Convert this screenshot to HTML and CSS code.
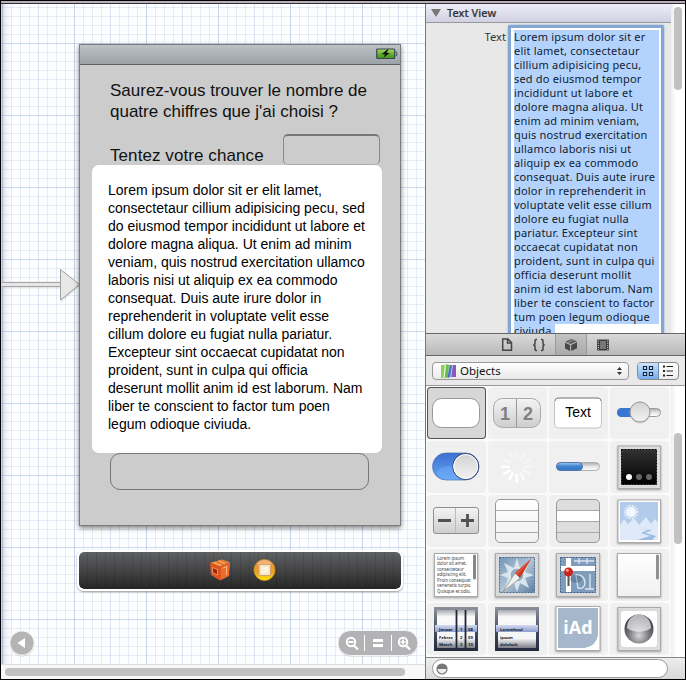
FILE: index.html
```html
<!DOCTYPE html>
<html lang="fr">
<head>
<meta charset="utf-8">
<title>Interface Builder</title>
<link rel="stylesheet" href="styles.css">
</head>
<body>
<div class="window">
  <div class="titlestrip"></div>
  <div class="panes">
    <main class="editor">
      <div class="canvas">
        <svg class="entry" width="80" height="40" viewBox="0 0 80 40">
          <path d="M1 17.5H60V7.500L79 22.500L60 38.500V24.500H1Z" fill="#bbb" opacity=".35"/>
          <path d="M1 18.500H60M1 22.500H60" stroke="#a5a5a5"/>
          <path d="M1 19H60V22H1Z" fill="#e6e6e6"/>
          <path d="M59.500 5.500L78.500 20.500L59.500 36Z" fill="#e8e8e8" stroke="#a0a0a0"/>
        </svg>
        <section class="phone">
          <div class="status">
            <svg width="22" height="12" viewBox="0 0 22 12">
              <defs><linearGradient id="bat" x2="0" y2="1"><stop offset="0" stop-color="#a5d673"/><stop offset=".5" stop-color="#68b531"/><stop offset="1" stop-color="#3d8f18"/></linearGradient></defs>
              <rect x=".7" y="1" width="18" height="9.500" rx="1" fill="url(#bat)" stroke="#3b4650" stroke-width="1.200"/>
              <path d="M19.500 4h1.300v3.500h-1.300" fill="#8b9297" stroke="#3b4650" stroke-width=".8"/>
              <path d="M11.500 1.500L5.500 6.200H9L7.500 9.500L14 5H10.500L12.500 1.500Z" fill="#111"/>
            </svg>
          </div>
          <div class="content">
            <p class="question">Saurez-vous trouver le nombre de<br>quatre chiffres que j'ai choisi ?</p>
            <div class="guess"><span>Tentez votre chance</span><div class="field"></div></div>
            <div class="textview">Lorem ipsum dolor sit er elit lamet,<br>consectetaur cillium adipisicing pecu, sed<br>do eiusmod tempor incididunt ut labore et<br>dolore magna aliqua. Ut enim ad minim<br>veniam, quis nostrud exercitation ullamco<br>laboris nisi ut aliquip ex ea commodo<br>consequat. Duis aute irure dolor in<br>reprehenderit in voluptate velit esse<br>cillum dolore eu fugiat nulla pariatur.<br>Excepteur sint occaecat cupidatat non<br>proident, sunt in culpa qui officia<br>deserunt mollit anim id est laborum. Nam<br>liber te conscient to factor tum poen<br>legum odioque civiuda.</div>
            <div class="button"></div>
          </div>
        </section>
        <div class="dock">
          <svg width="22" height="24" viewBox="0 0 22 24">
            <path d="M1 5L13 1.500L21 4.500L11 9Z" fill="#f79a4d"/><path d="M1 5L11 9L11 22.500L2 17Z" fill="#e2551f"/><path d="M11 9L21 4.500L20 18L11 22.500Z" fill="#ec6b2a"/>
            <path d="M3.500 9.500L8.500 11.500V17L3.500 14.500Z" fill="#9f2410" stroke="#f5a26a" stroke-width=".8"/><path d="M14 10L17.500 8.500V17" fill="none" stroke="#fbc08a" stroke-width=".9"/><path d="M1 5L11 9L21 4.500M11 9V22" fill="none" stroke="#c6461a" stroke-width=".8"/><path d="M7 3.500L15 7M12 2L18 5" stroke="#d95a20"/>
          </svg>
          <svg width="23" height="24" viewBox="0 0 23 24">
            <defs><linearGradient id="orb" x2="0" y2="1"><stop offset="0" stop-color="#e88d42"/><stop offset=".65" stop-color="#eda322"/><stop offset="1" stop-color="#fff000"/></linearGradient></defs>
            <circle cx="11.500" cy="12" r="10.500" fill="url(#orb)" stroke="#d5921f" stroke-width=".8"/><ellipse cx="11.500" cy="6" rx="7" ry="4" fill="#fff" opacity=".3"/>
            <path d="M6 6.500H17.500V17.500H6Z" fill="#f8e6cb" stroke="#d0a468"/><path d="M8.500 9H15V15H8.500Z" fill="#fdf3df"/>
          </svg>
        </div>
        <svg class="back" width="28" height="28" viewBox="0 0 28 28"><circle cx="14" cy="15" r="12.500" fill="#ccc"/><circle cx="14" cy="14" r="12.200" fill="#b4b4b4" stroke="#f7f7f7" stroke-width="1.200"/><path d="M9.500 14L17 9V19Z" fill="#fff"/></svg>
        <svg class="zoom" width="84" height="29" viewBox="0 0 84 29">
          <rect x="2" y="2.500" width="80" height="25" rx="12.500" fill="#ccc"/><rect x="2" y="1.500" width="80" height="25" rx="12.500" fill="#b3b3b6" stroke="#f3f3f3"/>
          <path d="M28.500 6V22M55.500 6V22" stroke="#fff"/><g fill="none" stroke="#fff" stroke-width="2"><circle cx="15" cy="13" r="4.200"/><path d="M12.500 13H17.500M18 16.500L22 20.500" stroke-width="2.200"/><path d="M37 11.500H47M37 16.500H47" stroke-width="3"/><circle cx="67" cy="13" r="4.200"/><path d="M70 16.500L74 20.500" stroke-width="2.400"/><path d="M64.500 13H69.500M67 10.500V15.500" stroke-width="1.600"/></g>
        </svg>
      </div>
      <div class="hscroll"><div class="hthumb"></div></div>
    </main>

    <aside class="utilities">
      <section class="inspector">
        <div class="attributes">
          <header class="section-head"><span class="disclosure"></span><span class="section-title">Text View</span></header>
          <div class="row">
            <label>Text</label>
            <div class="textarea"><div class="selected">Lorem ipsum dolor sit er<br>elit lamet, consectetaur<br>cillium adipisicing pecu,<br>sed do eiusmod tempor<br>incididunt ut labore et<br>dolore magna aliqua. Ut<br>enim ad minim veniam,<br>quis nostrud exercitation<br>ullamco laboris nisi ut<br>aliquip ex ea commodo<br>consequat. Duis aute irure<br>dolor in reprehenderit in<br>voluptate velit esse cillum<br>dolore eu fugiat nulla<br>pariatur. Excepteur sint<br>occaecat cupidatat non<br>proident, sunt in culpa qui<br>officia deserunt mollit<br>anim id est laborum. Nam<br>liber te conscient to factor<br>tum poen legum odioque</div><span class="lastline">civiuda.</span></div>
          </div>
        </div>
        <div class="vscroll"><div class="vthumb"></div></div>
      </section>

      <nav class="tabs">
        <span class="tab"><svg width="14" height="16" viewBox="0 0 14 16"><path d="M2.700 2H8L11.500 5.500V13.300H2.700Z M7.500 2V6H11.500" fill="none" stroke="#444" stroke-width="1.500"/></svg></span>
        <span class="tab"><svg width="14" height="14" viewBox="0 0 14 14"><path d="M5 1.500H4Q3 1.500 3 3V5.500Q3 7 1.300 7Q3 7 3 8.500V11Q3 12.500 4 12.500H5M9 1.500H10Q11 1.500 11 3V5.500Q11 7 12.700 7Q11 7 11 8.500V11Q11 12.500 10 12.500H9" fill="none" stroke="#444" stroke-width="1.500"/></svg></span>
        <span class="tab active"><svg width="14" height="14" viewBox="0 0 14 14"><path d="M1 3.700L7.500 1L13 3.200L6.500 6Z" fill="#5b5b5b"/><path d="M1 4.800L6 7V13L1 10.500ZM7.200 7L13 4.300V10.300L7.200 13Z" fill="#484848"/><path d="M3.500 4.500L9.500 2" stroke="#aaa" stroke-width=".7"/></svg></span>
        <span class="tab"><svg width="14" height="12" viewBox="0 0 14 12"><path d="M1 .5H13V11.500H1Z" fill="#3c3c3c"/><path d="M2.300 1.500V11M11.700 1.500V11" stroke="#ccc" stroke-width="1.200" stroke-dasharray="1 1.200"/><path d="M4 2H10V10H4Z" fill="#777"/></svg></span>
      </nav>

      <div class="libbar">
        <div class="popup">
          <svg width="17" height="16" viewBox="0 0 17 16"><path d="M1 2H5L4 15H1Z" fill="#88cf5a"/><path d="M5 1.500H9L8 14L4 15.500Z" fill="#6dbb49"/><path d="M5.500 2L4 15" stroke="#e4f8d5" stroke-width="1.300"/><path d="M9.500 2H12.500L10.500 14L7.500 15Z" fill="#4577c9"/><path d="M12.500 2H16V14H11Z" fill="#8a59bd"/><path d="M12.500 2L10.700 14" stroke="#d8d0f5" stroke-width=".7"/></svg>
          <span class="popup-name">Objects</span>
          <svg width="7" height="10" viewBox="0 0 7 10"><path d="M1 4L3.500 1L6 4ZM1 6H6L3.500 9Z" fill="#333"/></svg>
        </div>
        <div class="views">
          <span class="view on"><svg width="12" height="12" viewBox="0 0 12 12"><path d="M1.500 1.500H4.500V4.500H1.500ZM7.500 1.500H10.500V4.500H7.500ZM1.500 7.500H4.500V10.500H1.500ZM7.500 7.500H10.500V10.500H7.500Z" fill="#d9ecff" stroke="#10243e" stroke-width="1.200"/></svg></span>
          <span class="view"><svg width="12" height="12" viewBox="0 0 12 12"><path d="M1 1.500H3M1 6H3M1 10.500H3" stroke="#222" stroke-width="2"/><path d="M4.500 1.500H11M4.500 6H11M4.500 10.500H11" stroke="#222"/></svg></span>
        </div>
      </div>

      <section class="library">
        <svg class="defs" width="0" height="0">
          <defs>
            <linearGradient id="grey" x2="0" y2="1"><stop offset="0" stop-color="#f4f4f4"/><stop offset="1" stop-color="#cdcdcd"/></linearGradient>
            <linearGradient id="soft" x2="0" y2="1"><stop offset="0" stop-color="#fff"/><stop offset="1" stop-color="#f0f0f0"/></linearGradient>
            <linearGradient id="blue" x2="0" y2="1"><stop offset="0" stop-color="#3d6fd2"/><stop offset="1" stop-color="#64a5f4"/></linearGradient>
            <linearGradient id="bar" x2="0" y2="1"><stop offset="0" stop-color="#a0c5ee"/><stop offset=".5" stop-color="#3f83d0"/><stop offset="1" stop-color="#3277c8"/></linearGradient>
            <linearGradient id="groove" x2="0" y2="1"><stop offset="0" stop-color="#aaa"/><stop offset=".5" stop-color="#e5e5e5"/><stop offset="1" stop-color="#fff"/></linearGradient>
            <linearGradient id="knob" x2="0" y2="1"><stop offset="0" stop-color="#d2d2d2"/><stop offset="1" stop-color="#f3f3f3"/></linearGradient>
            <linearGradient id="black" x2="0" y2="1"><stop offset="0" stop-color="#333"/><stop offset="1" stop-color="#000"/></linearGradient>
            <linearGradient id="frame" x2="0" y2="1"><stop offset="0" stop-color="#8e929b"/><stop offset=".55" stop-color="#444b60"/><stop offset="1" stop-color="#24283a"/></linearGradient>
            <linearGradient id="wheel" x2="0" y2="1"><stop offset="0" stop-color="#a9a9af"/><stop offset=".18" stop-color="#fafafa"/><stop offset=".75" stop-color="#f5f5f5"/><stop offset="1" stop-color="#7b7d88"/></linearGradient>
            <linearGradient id="band" x2="0" y2="1"><stop offset="0" stop-color="#d5dcf0"/><stop offset="1" stop-color="#8b9aca"/></linearGradient>
            <linearGradient id="sea" x2="1" y2="1"><stop offset="0" stop-color="#7195b9"/><stop offset=".5" stop-color="#b0c5d4"/><stop offset="1" stop-color="#5c7fa4"/></linearGradient>
            <radialGradient id="ball" cx=".5" cy=".72" r=".65"><stop offset="0" stop-color="#d7d7db"/><stop offset=".55" stop-color="#77777f"/><stop offset="1" stop-color="#35353b"/></radialGradient>
          </defs>
        </svg>
        <div class="grid">
          <div class="cell chosen"><svg viewBox="0 0 59 53"><rect x="5.500" y="11.500" width="47" height="29" rx="9" fill="#fff" stroke="#999"/></svg></div>
          <div class="cell"><svg viewBox="0 0 59 53"><rect x="5.500" y="11.500" width="47" height="29" rx="9" fill="url(#grey)" stroke="#aaa"/><path d="M28.500 12V40" stroke="#999"/><g class="seg"><text x="17" y="33">1</text><text x="40" y="33">2</text></g></svg></div>
          <div class="cell"><svg viewBox="0 0 59 53"><rect x="5.500" y="11" width="47" height="30" rx="4" fill="#fff" stroke="#c4c4c4"/><path d="M6 14Q6 11 9 11H49Q52 11 52 14" fill="none" stroke="#888"/><text class="sample" x="29" y="30">Text</text></svg></div>
          <div class="cell"><svg viewBox="0 0 59 53"><rect x="7.500" y="21.500" width="43" height="8" rx="4" fill="url(#groove)" stroke="#999"/><rect x="7" y="21" width="25" height="9" rx="4.500" fill="#3877d4"/><circle cx="30" cy="26" r="10.500" fill="#aaa" opacity=".4"/><circle cx="30" cy="25" r="10" fill="url(#knob)" stroke="#999"/></svg></div>

          <div class="cell"><svg viewBox="0 0 59 53"><rect x="5.500" y="12" width="46.500" height="27" rx="13.500" fill="url(#blue)" stroke="#4a6faa" stroke-width=".7"/><ellipse cx="24" cy="32" rx="14" ry="7" fill="#75b0ff" opacity=".45"/><circle cx="38.700" cy="25.500" r="13" fill="url(#knob)" stroke="#283d68"/><circle cx="38.700" cy="25.500" r="12" fill="none" stroke="#fff"/></svg></div>
          <div class="cell"><svg viewBox="0 0 59 53"><g transform="translate(28.700 25.700)" stroke="#fff" stroke-width="2.600" stroke-linecap="round"><path d="M0 8V14.500"/><path d="M0 8V14.500" transform="rotate(30)"/><path d="M0 8V14.500" transform="rotate(60)"/><path d="M0 8V14.500" transform="rotate(90)"/><path d="M0 8V14.500" transform="rotate(120)" opacity=".5"/><path d="M0 8V14.500" transform="rotate(150)" opacity=".35"/><path d="M0 8V14.500" transform="rotate(180)" opacity=".3"/><path d="M0 8V14.500" transform="rotate(210)" opacity=".3"/><path d="M0 8V14.500" transform="rotate(240)" opacity=".35"/><path d="M0 8V14.500" transform="rotate(270)" opacity=".4"/><path d="M0 8V14.500" transform="rotate(300)" opacity=".5"/><path d="M0 8V14.500" transform="rotate(330)" opacity=".75"/></g></svg></div>
          <div class="cell"><svg viewBox="0 0 59 53"><rect x="7.500" y="21.500" width="43" height="8" rx="4" fill="url(#groove)" stroke="#b0b0b0"/><rect x="7.500" y="21.500" width="26" height="8" rx="4" fill="url(#bar)" stroke="#5578a5"/></svg></div>
          <div class="cell"><svg viewBox="0 0 59 53"><rect class="tile" x="8" y="5" width="42.500" height="42.500" fill="#dcdcdc"/><rect x="11.500" y="8.500" width="35" height="35" fill="url(#black)" stroke="#000" stroke-dasharray="2 1"/><circle cx="19" cy="36" r="3" fill="#fff"/><circle cx="29" cy="36" r="3" fill="#666"/><circle cx="39" cy="36" r="3" fill="#666"/></svg></div>

          <div class="cell"><svg viewBox="0 0 59 53"><rect x="6.500" y="12.500" width="45" height="26" rx="2.500" fill="url(#grey)" stroke="#8e8e8e"/><path d="M28.500 13V38" stroke="#bbb"/><path d="M11 25.500H24M34 25.500H47M40.500 19V32" stroke="#505056" stroke-width="2.800"/></svg></div>
          <div class="cell"><svg viewBox="0 0 59 53"><rect x="7.500" y="4.500" width="43" height="43" rx="4.500" fill="url(#soft)" stroke="#999"/><path d="M8 15.500H50M8 26.500H50M8 37.500H50" stroke="#aaa"/></svg></div>
          <div class="cell"><svg viewBox="0 0 59 53"><rect x="7.500" y="4.500" width="43" height="43" rx="4.500" fill="#dedede" stroke="#999"/><path d="M8 16H50V26H8Z" fill="#fff"/><path d="M8 15.500H50M8 26.500H50M8 37.500H50" stroke="#aaa"/></svg></div>
          <div class="cell"><svg viewBox="0 0 59 53"><rect class="tile" x="8" y="5" width="42.500" height="42.500" fill="#fff"/><path d="M10 7H48V45H10Z" fill="#b3cbea"/><path d="M10 30L14 24L18 29L24 23L29 30L36 22L41 29L45 24L48 28V45H10Z" fill="#dfe9f7"/><circle cx="21" cy="17" r="5" fill="#f3f8ff"/><circle cx="21" cy="17" r="6.300" fill="none" stroke="#e7f1ff" stroke-width="2" stroke-dasharray="1.400 1.100"/><path d="M28 34L38 35L31 38L40 41L27 45H42L46 41L35 38L42 35Z" fill="#9cbbe3"/></svg></div>

          <div class="cell"><svg viewBox="0 0 59 53"><rect class="tile" x="7.500" y="4.500" width="43" height="43" fill="#fff"/><path d="M47.500 7V29" stroke="#888" stroke-width="3" stroke-linecap="round"/><g class="tiny"><text x="10" y="10.500">Lorem ipsum</text><text x="10" y="16">dolor sit amet,</text><text x="10" y="21.500">consectetaur</text><text x="10" y="27">adipiscing elit.</text><text x="10" y="32.500">Proin consequat</text><text x="10" y="38">venenatis turpis.</text><text x="10" y="43.500">Quisque et odio.</text></g></svg></div>
          <div class="cell"><svg viewBox="0 0 59 53"><rect class="tile" x="7.500" y="4.500" width="43" height="43" fill="#dcdcdc"/><rect x="11.500" y="8.500" width="35" height="35" fill="url(#sea)" stroke="#48698c" stroke-dasharray="2 1"/><path d="M29 9L32 19L41 14L37 23L46 26L37 29L41 39L32 34L29 43L26 34L17 39L20 29L12 26L20 23L16 14L26 19Z" fill="#d8e5ec"/><circle cx="29" cy="26" r="7" fill="#91afc6" stroke="#edf4f8"/><path d="M43 10L32 29L27 24Z" fill="#ce3421"/><path d="M27 24L32 29L15 43Z" fill="#f1f1ee" stroke="#888" stroke-width=".7"/><path d="M43 10L27 24L29.500 26.500Z" fill="#e0523c"/></svg></div>
          <div class="cell"><svg viewBox="0 0 59 53"><rect class="tile" x="7.500" y="4.500" width="43" height="43" fill="#dcdcdc"/><rect x="11.500" y="8.500" width="35" height="35" fill="#7f9cbd"/><path d="M17 9H22V17H46V22H22V43H17V22H12V17H17Z" fill="#fff"/><path d="M25 12H45M30 9V15M38 9V15M27 26C38 24 39 42 29 39ZM41 25V40M36 40H45" fill="none" stroke="#dce6ef" stroke-width="1.400"/><rect x="11.500" y="8.500" width="35" height="35" fill="none" stroke="#365d86" stroke-dasharray="2 1"/><ellipse cx="27" cy="30" rx="6" ry="4" fill="#47627f" opacity=".4"/><path d="M19.500 24V37" stroke="#555" stroke-width="2"/><circle cx="19.500" cy="23" r="4.500" fill="#cc2419"/><circle cx="18.300" cy="21.300" r="1.500" fill="#f6a49b"/></svg></div>
          <div class="cell"><svg viewBox="0 0 59 53"><rect class="tile" x="7.500" y="4.500" width="43" height="43" fill="url(#soft)"/><path d="M47.500 7V29" stroke="#909090" stroke-width="3" stroke-linecap="round"/></svg></div>

          <div class="cell"><svg viewBox="0 0 59 53"><rect x="7" y="4" width="44" height="44" fill="url(#frame)"/><rect x="10" y="7" width="38" height="38" fill="url(#wheel)"/><path d="M8 22H50V29H8Z" fill="url(#band)"/><path d="M29.500 7V45M38.500 7V45" stroke="#222736" stroke-width="1.800"/><g class="wheeltext"><text x="12" y="27.500">Januar</text><text x="12" y="35.500">Febrec</text><text x="12" y="43">Match</text><text x="33" y="27.500">1</text><text x="33" y="35.500">2</text><text x="33" y="43">3</text><text x="41" y="27.500">08</text><text x="41" y="35.500">09</text><text x="41" y="43">10</text></g></svg></div>
          <div class="cell"><svg viewBox="0 0 59 53"><rect x="7" y="4" width="44" height="44" fill="url(#frame)"/><rect x="10" y="7" width="38" height="38" fill="url(#wheel)"/><path d="M8 22H50V29H8Z" fill="url(#band)"/><g class="wheeltext"><text x="12" y="27.500">Loremhoul</text><text x="12" y="35.500">ipsum</text><text x="12" y="43">dolobult</text></g></svg></div>
          <div class="cell"><svg viewBox="0 0 59 53"><rect class="tile" x="7" y="3.500" width="44" height="44" fill="#fff"/><path d="M9 5H49V32Q47 43 36 45H9Z" fill="#a6b7cb"/><text class="iad" x="29" y="30.500">iAd</text></svg></div>
          <div class="cell"><svg viewBox="0 0 59 53"><rect class="tile" x="8" y="4.500" width="42.500" height="43" fill="#dcdcdc"/><rect x="11" y="8" width="36" height="36" rx="3" fill="#fff"/><circle cx="29" cy="26" r="14.500" fill="url(#ball)"/><path d="M17 25C17 7 41 7 41 25C35 30 23 30 17 25Z" fill="#f6f6f8" opacity=".68"/></svg></div>
        </div>
        <div class="vscroll"><div class="vthumb low"></div></div>
      </section>
      <footer class="filter"><div class="search"><svg width="12" height="12" viewBox="0 0 12 12"><circle cx="6" cy="6" r="5" fill="#eee" stroke="#777" stroke-width="1.200"/><path d="M1 6A5 5 0 0 1 11 6Z" fill="#777"/></svg></div></footer>
    </aside>
  </div>
</div>
</body>
</html>
```
FILE: styles.css
```css
* { box-sizing: border-box; }
body { margin: 0; background: #000; font-family: "Liberation Sans", Arial, sans-serif; }
.window { width: 686px; height: 680px; padding: 1px; display: flex; flex-direction: column; }
.titlestrip { height: 3px; background: #b9adb9; border-bottom: 1px solid #343039; }
.panes { flex: 1; display: flex; min-height: 0; }

.editor { width: 424px; display: flex; flex-direction: column; }
.canvas {
  position: relative; flex: 1; overflow: hidden;
  background:
    linear-gradient(90deg, rgba(120,130,165,.4), rgba(120,130,165,.1) 5px, transparent 11px),
    repeating-linear-gradient(90deg, transparent 0 1px, rgba(160,185,220,.36) 1px 2px, transparent 2px 72px),
    repeating-linear-gradient(90deg, transparent 0 1px, rgba(170,190,220,.2) 1px 2px, transparent 2px 36px),
    repeating-linear-gradient(90deg, transparent 0 1px, rgba(180,195,225,.3) 1px 2px, transparent 2px 9px),
    repeating-linear-gradient(180deg, transparent 0 39px, rgba(160,185,220,.36) 39px 40px, transparent 40px 72px),
    repeating-linear-gradient(180deg, transparent 0 3px, rgba(180,195,225,.3) 3px 4px, transparent 4px 9px),
    #fdfeff;
}
.entry { position: absolute; left: 0; top: 260px; }
.phone { position: absolute; left: 78px; top: 40px; width: 322px; height: 482px; display: flex; flex-direction: column; background: #ccc; border: 1px solid #787c80; box-shadow: 0 2px 5px rgba(0,0,0,.5); }
.status { height: 20px; display: flex; justify-content: flex-end; align-items: center; padding: 0 2px 2px 0; background: linear-gradient(#bcc2c5, #9ca3a6); border-bottom: 1px solid #5d6163; }
.content { flex: 1; display: flex; flex-direction: column; padding: 15px 12px 0; }
.question { margin: 0 0 0 18px; font-size: 17px; line-height: 21px; color: #111; white-space: nowrap; }
.guess { margin: 12px 8px 0 18px; height: 31px; display: flex; justify-content: space-between; font-size: 17px; line-height: 44px; color: #111; white-space: nowrap; letter-spacing: .08px; }
.field { width: 97px; height: 31px; border: 1px solid #888; border-top: 2px solid #777; border-bottom-color: #aaa; border-radius: 5px; }
.textview { width: 290px; height: 288px; background: #fff; border-radius: 7px; padding: 16px; font-size: 14px; line-height: 18px; white-space: nowrap; color: #000; }
.button { width: 259px; height: 37px; margin-left: 18px; border: 1px solid #777; border-radius: 10px; }
.dock { position: absolute; left: 76px; top: 546px; width: 326px; height: 41px; display: flex; justify-content: center; align-items: center; gap: 22px; padding: 0 0 2px 4px; border: 2px solid #fff; border-radius: 7px; background: repeating-linear-gradient(90deg, transparent 0 8px, rgba(0,0,0,.1) 8px 9px), linear-gradient(#606163, #262626); background-clip: padding-box; box-shadow: 0 1px 2px rgba(0,0,0,.4); }
.back { position: absolute; left: 7px; top: 625px; }
.zoom { position: absolute; left: 335px; top: 625px; }
.hscroll { height: 15px; background: #f8f8f8; border-top: 1px solid #ddd; padding: 3px 4px; }
.hthumb { width: 400px; height: 8px; border-radius: 4px; background: #c1c1c1; }

.utilities { width: 260px; display: flex; flex-direction: column; border-left: 1px solid #777; background: #e8e8e8; font-family: "Noto Sans", "Open Sans", sans-serif; }
.inspector { height: 329px; display: flex; overflow: hidden; }
.attributes { flex: 1; }
.section-head { height: 19px; display: flex; align-items: center; gap: 6px; padding-left: 5px; background: linear-gradient(#eeeef8, #d0d0e2); border-bottom: 1px solid #999; color: #333; font-size: 10.800px; font-weight: 500; letter-spacing: .1px; }
.section-title { padding-bottom: 1px; -webkit-text-stroke: .2px #333; }
.disclosure { border: 5px solid transparent; border-top: 8px solid #777; border-bottom: 0; }
.row { display: flex; justify-content: space-between; padding: 2px 7px 0 0; }
.row label { width: 80px; text-align: right; font-size: 11.200px; line-height: 14px; padding-top: 5px; color: #333; }
.textarea { width: 156px; height: 330px; padding: 2px 2px 2px 3px; border: 3px solid #83a7d2; border-radius: 2px; background: #fff; box-shadow: 0 0 2px #6e9bd0; font-size: 11px; line-height: 14px; color: #101c30; white-space: nowrap; letter-spacing: .19px; }
.selected, .lastline { background: #b4d3fc; }
.selected { width: 145px; height: 294px; }
.lastline { display: block; width: 41px; height: 14px; }
.vscroll { width: 14px; flex: none; background: linear-gradient(90deg, #eee, #fff 5px); }
.vthumb { width: 8px; height: 83px; margin: 3px 0 0 3px; border-radius: 4px; background: #c1c1c1; }

.tabs { height: 23px; display: flex; padding-left: 65px; background: linear-gradient(#d9d9d9, #b9b9b9); border: solid #666; border-width: 1px 0; }
.tab { width: 32px; display: flex; align-items: center; justify-content: center; }
.active { background: linear-gradient(#c2c2c2, #aaa); border: solid #999; border-width: 0 1px; }
.libbar { height: 30px; display: flex; gap: 8px; align-items: center; padding: 0 6px; border-bottom: 1px solid #999; background: #e9e9e9; }
.popup { width: 197px; height: 18px; display: flex; align-items: center; padding: 0 5px 0 7px; border: 1px solid #999; border-radius: 4px; background: linear-gradient(#fff, #e9e9e9); }
.popup-name { flex: 1; font-size: 11.500px; line-height: 16px; color: #111; margin-left: 3px; }
.views { width: 42px; height: 18px; display: flex; border: 1px solid #888; border-radius: 4px; overflow: hidden; background: linear-gradient(#fff, #eee); }
.view { flex: 1; display: flex; align-items: center; justify-content: center; }
.view.on { background: linear-gradient(#cfe3fa, #76acf0); border-right: 1px solid #6787ad; }

.library { height: 271px; display: flex; background: #fafafa; }
.defs { position: absolute; }
.grid { flex: 1; display: grid; grid-template-columns: repeat(4, 59px); grid-auto-rows: 52px; gap: 2px; padding: 1px 0 0 1px; }
.cell { border-radius: 4px; background: #f0f0f0; }
.cell svg { display: block; width: 59px; height: 53px; }
.chosen { background: #d7d7d7; box-shadow: inset 0 0 0 1px #555; }
.vthumb.low { height: 111px; margin-top: 47px; }
.tile { stroke: #aaa; stroke-width: 1; filter: drop-shadow(0 1px 1px rgba(0,0,0,.35)); }
.seg { font: bold 18px "Liberation Sans", sans-serif; fill: #808080; text-anchor: middle; }
.sample { font: 14px "Liberation Sans", sans-serif; text-anchor: middle; }
.tiny { font: 4.400px "Noto Sans", sans-serif; fill: #444; }
.wheeltext { font: bold 4.200px "Noto Sans", sans-serif; fill: #161820; }
.iad { font: bold 18px "Open Sans", sans-serif; fill: #fff; text-anchor: middle; }
.filter { flex: 1; display: flex; align-items: center; padding: 0 6px; border-top: 1px solid #888; background: linear-gradient(#eee, #d8d8d8); }
.search { width: 236px; height: 19px; display: flex; align-items: center; padding-left: 3px; border: 1px solid #999; border-radius: 10px; background: #fff; }
```
